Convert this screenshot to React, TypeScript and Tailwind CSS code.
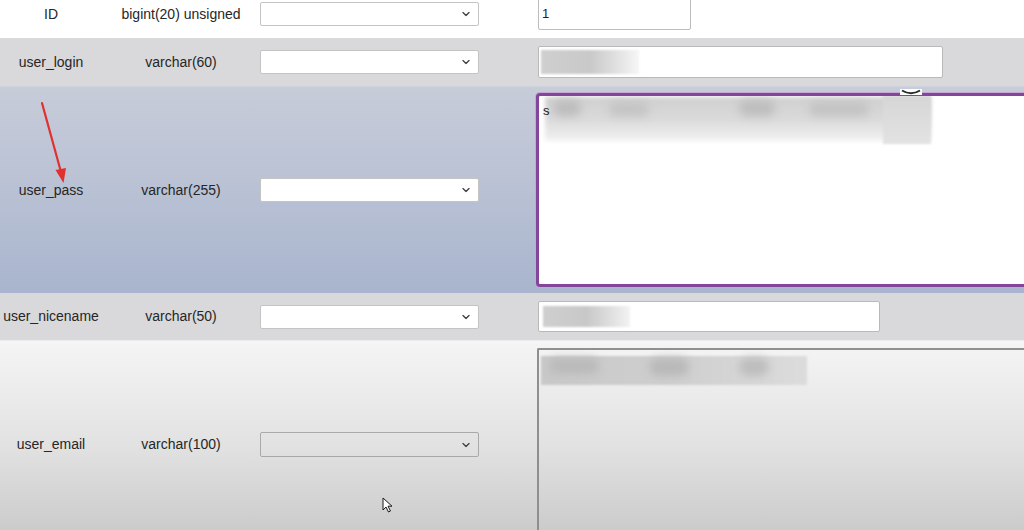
import React from "react";

function Chevron() {
  return (
    <svg width="8" height="5" viewBox="0 0 8 5" className="absolute right-[8px] top-1/2 -translate-y-1/2">
      <path d="M1 1 L4 4 L7 1" fill="none" stroke="#444" strokeWidth="1.4" strokeLinecap="round" strokeLinejoin="round" />
    </svg>
  );
}

function Select({ dim }: { dim?: boolean }) {
  return (
    <div
      className={
        dim
          ? "relative w-[219px] h-[25px] rounded-[2px] border border-[#a9a9a9] bg-transparent shrink-0"
          : "relative w-[219px] h-[24px] rounded-[2px] border border-[#c4c4c4] bg-white shrink-0"
      }
    >
      <Chevron />
    </div>
  );
}

function Label({ name, type }: { name: string; type: string }) {
  return (
    <>
      <div className="w-[102px] shrink-0 text-center text-[14px] text-[#262626]">{name}</div>
      <div className="w-[158px] shrink-0 text-center text-[14px] text-[#262626]">{type}</div>
    </>
  );
}

export default function App() {
  return (
    <div
      className="relative w-[1024px] h-[530px] overflow-hidden bg-white"
      style={{ fontFamily: '"Liberation Sans", Arial, Helvetica, sans-serif' }}
    >
      {/* Row ID */}
      <div className="flex items-center h-[38px] pb-[10px] bg-white">
        <Label name="ID" type="bigint(20) unsigned" />
        <Select />
        <div className="ml-[59px] w-[153px] h-[32px] rounded-[2px] border border-[#bdbdbd] bg-white flex items-center pl-[3px] text-[13px] text-[#222] shrink-0">
          1
        </div>
      </div>

      {/* Row user_login */}
      <div className="flex items-center h-[48px] bg-[#d9d8da]">
        <Label name="user_login" type="varchar(60)" />
        <Select />
        <div className="relative ml-[59px] w-[405px] h-[32px] rounded-[2px] border border-[#b9b9b9] bg-white shrink-0 overflow-hidden">
          <div className="absolute left-[2px] top-[3px] w-[98px] h-[24px] bg-gradient-to-r from-[#cfcfcf] via-[#c9c9c9] to-[#f6f6f6] blur-[1px]" />
        </div>
      </div>

      {/* Row user_pass */}
      <div className="flex items-center h-[207px] bg-gradient-to-b from-[#c7ccd9] via-[#b9c1d4] to-[#a8b5cd] border-t border-[#cfd3de]">
        <Label name="user_pass" type="varchar(255)" />
        <Select />
        <div className="relative ml-[57px] h-[194px] flex-1 rounded-l-[4px] border-[3px] border-r-0 border-[#84469a] bg-white shadow-[0_0_0_1px_#caa6d4] overflow-hidden">
          <div className="absolute left-[6px] top-[1px] w-[386px] h-[44px] bg-gradient-to-b from-[#d0d0d0] via-[#dadada] to-[#f2f2f2] blur-[2px]" />
          <div className="absolute left-[14px] top-[4px] w-[28px] h-[16px] rounded-full bg-[#bdbdbd] blur-[4px]" />
          <div className="absolute left-[70px] top-[6px] w-[40px] h-[14px] rounded-full bg-[#c4c4c4] blur-[4px]" />
          <div className="absolute left-[200px] top-[4px] w-[36px] h-[16px] rounded-full bg-[#bebebe] blur-[4px]" />
          <div className="absolute left-[270px] top-[6px] w-[60px] h-[14px] rounded-full bg-[#c3c3c3] blur-[4px]" />
          <div className="absolute left-[344px] top-[0px] w-[48px] h-[48px] bg-gradient-to-b from-[#d6d6d6] to-[#e3e3e3] blur-[1px]" />
          <span className="absolute left-[4px] top-[5px] text-[13px] text-[#222]">s</span>
        </div>
      </div>

      {/* Row user_nicename */}
      <div className="flex items-center h-[48px] bg-[#d9d8da] border-b border-[#ececec]">
        <Label name="user_nicename" type="varchar(50)" />
        <Select />
        <div className="relative ml-[59px] w-[342px] h-[31px] rounded-[2px] border border-[#b9b9b9] bg-white shrink-0 overflow-hidden">
          <div className="absolute left-[4px] top-[4px] w-[87px] h-[21px] bg-gradient-to-r from-[#cfcfcf] via-[#c8c8c8] to-[#f3f3f3] blur-[1px]" />
        </div>
      </div>

      {/* Row user_email */}
      <div className="flex items-center h-[207px] bg-gradient-to-b from-[#f5f5f5] via-[#e2e2e2] to-[#c7c7c7]">
        <Label name="user_email" type="varchar(100)" />
        <Select dim />
        <div className="relative ml-[58px] h-[194px] flex-1 rounded-tl-[2px] border-l-2 border-t-2 border-[#8f8f8f] bg-transparent overflow-hidden">
          <div className="absolute left-[2px] top-[6px] w-[266px] h-[29px] bg-gradient-to-r from-[#c9c9c9] via-[#cfcfcf] to-[#dcdcdc] blur-[1px]" />
          <div className="absolute left-[10px] top-[8px] w-[50px] h-[16px] rounded-full bg-[#bababa] blur-[4px]" />
          <div className="absolute left-[110px] top-[8px] w-[40px] h-[18px] rounded-full bg-[#b9b9b9] blur-[4px]" />
          <div className="absolute left-[200px] top-[8px] w-[30px] h-[18px] rounded-full bg-[#bdbdbd] blur-[4px]" />
        </div>
      </div>

      {/* Caret notch at textarea top */}
      <svg className="absolute left-[900px] top-[89px]" width="22" height="8" viewBox="0 0 22 8">
        <rect x="0" y="0" width="22" height="6" fill="#ffffff" />
        <path d="M2 1.5 Q11 7 20 1.5" fill="none" stroke="#2a2a2a" strokeWidth="2" />
      </svg>

      {/* Red annotation arrow */}
      <svg className="absolute left-0 top-0 pointer-events-none" width="120" height="200" viewBox="0 0 120 200">
        <line x1="42" y1="103" x2="61" y2="172" stroke="#e0312f" strokeWidth="2.2" strokeLinecap="round" />
        <path d="M55.5 170 L63.5 183 L66 168 Z" fill="#e0312f" />
      </svg>

      {/* Mouse cursor */}
      <svg className="absolute left-[382px] top-[497px]" width="12" height="17" viewBox="0 0 12 17">
        <path d="M1 1 L1 13 L4 10 L6.5 15 L8.5 14 L6 9.2 L10 9.2 Z" fill="#ffffff" stroke="#1a1a1a" strokeWidth="1" strokeLinejoin="round" />
      </svg>
    </div>
  );
}
